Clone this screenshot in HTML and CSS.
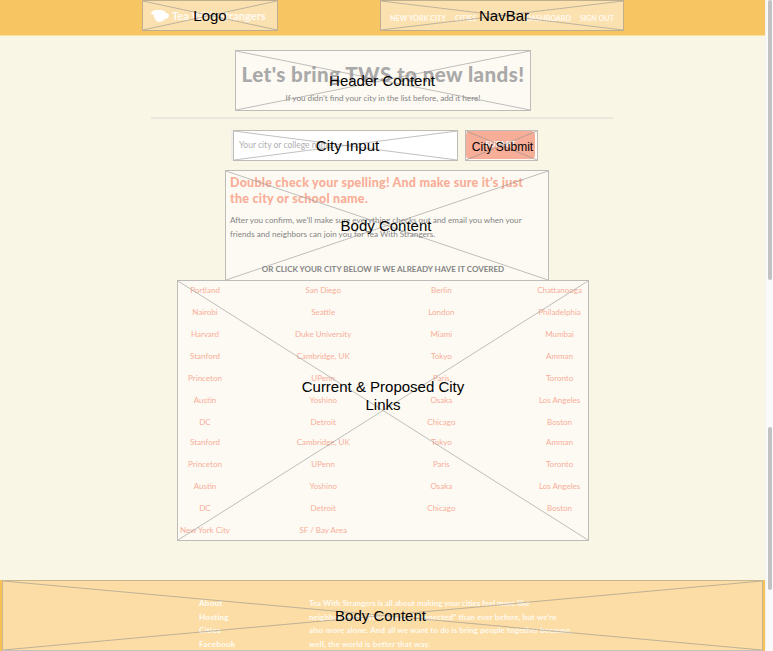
FILE: index.html
```html
<!DOCTYPE html>
<html lang="en">
<head>
<meta charset="utf-8">
<title>Suggest a city</title>
<link rel="stylesheet" href="styles.css">
</head>
<body>
<div class="page">
  <header class="topbar">
    <div class="wire logo">
      <svg class="teapot" viewBox="0 0 18 12"><path d="M2 1Q5-1 9 0Q14 0 15 3Q18 3 18 6Q17 9 14 9Q12 12 8 12Q4 11 4 8Q2 7 3 5L0 4Q0 2 2 1z"/></svg>
      <span class="brand">Tea With Strangers</span>
      <svg class="cross" viewBox="0 0 100 100" preserveAspectRatio="none"><path d="M0 0L100 100M0 100L100 0"/></svg>
      <b class="label">Logo</b>
    </div>
    <nav class="wire nav">
      <span class="n1">NEW YORK CITY</span><span class="n2">CITIES</span><span class="n3">DASHBOARD</span><span class="n4">SIGN OUT</span>
      <svg class="cross" viewBox="0 0 100 100" preserveAspectRatio="none"><path d="M0 0L100 100M0 100L100 0"/></svg>
      <b class="label">NavBar</b>
    </nav>
  </header>
  <main>
    <section class="wire intro">
      <h1>Let's bring TWS to new lands!</h1>
      <p>If you didn't find your city in the list before, add it here!</p>
      <svg class="cross" viewBox="0 0 100 100" preserveAspectRatio="none"><path d="M0 0L100 100M0 100L100 0"/></svg>
      <b class="label">Header Content</b>
    </section>
    <hr>
    <div class="form">
      <div class="wire input">
        <span>Your city or college name</span>
        <svg class="cross" viewBox="0 0 100 100" preserveAspectRatio="none"><path d="M0 0L100 100M0 100L100 0"/></svg>
        <b class="label">City Input</b>
      </div>
      <div class="wire submit">
        <span>SUBMIT</span>
        <svg class="cross" viewBox="0 0 100 100" preserveAspectRatio="none"><path d="M0 0L100 100M0 100L100 0"/></svg>
        <b class="label small">City Submit</b>
      </div>
    </div>
    <section class="wire copy">
      <h2>Double check your spelling! And make sure it’s just<br>the city or school name.</h2>
      <p>After you confirm, we’ll make sure everything checks out and email you when your<br>friends and neighbors can join you for Tea With Strangers.</p>
      <h3>OR CLICK YOUR CITY BELOW IF WE ALREADY HAVE IT COVERED</h3>
      <svg class="cross" viewBox="0 0 100 100" preserveAspectRatio="none"><path d="M0 0L100 100M0 100L100 0"/></svg>
      <b class="label">Body Content</b>
    </section>
    <section class="wire cities">
      <div class="grid">
        <a>Portland</a><a>San Diego</a><a>Berlin</a><a>Chattanooga</a>
        <a>Nairobi</a><a>Seattle</a><a>London</a><a>Philadelphia</a>
        <a>Harvard</a><a>Duke University</a><a>Miami</a><a>Mumbai</a>
        <a>Stanford</a><a>Cambridge, UK</a><a>Tokyo</a><a>Amman</a>
        <a>Princeton</a><a>UPenn</a><a>Paris</a><a>Toronto</a>
        <a>Austin</a><a>Yoshino</a><a>Osaka</a><a>Los Angeles</a>
        <a>DC</a><a>Detroit</a><a>Chicago</a><a>Boston</a>
      </div>
      <div class="grid more">
        <a>Stanford</a><a>Cambridge, UK</a><a>Tokyo</a><a>Amman</a>
        <a>Princeton</a><a>UPenn</a><a>Paris</a><a>Toronto</a>
        <a>Austin</a><a>Yoshino</a><a>Osaka</a><a>Los Angeles</a>
        <a>DC</a><a>Detroit</a><a>Chicago</a><a>Boston</a>
        <a>New York City</a><a>SF / Bay Area</a>
      </div>
      <svg class="cross" viewBox="0 0 100 100" preserveAspectRatio="none"><path d="M0 0L100 100M0 100L100 0"/></svg>
      <b class="label">Current &amp; Proposed City<br>Links</b>
    </section>
  </main>
  <footer>
    <div class="wire foot">
      <div class="links"><span>About</span><span>Hosting</span><span>Cities</span><span>Facebook</span></div>
      <div class="about">
        <span>Tea With Strangers is all about making your cities feel more like</span>
        <span>neighborhoods. We’re more “connected” than ever before, but we’re</span>
        <span>also more alone. And all we want to do is bring people together because,</span>
        <span>well, the world is better that way.</span>
      </div>
      <svg class="cross" viewBox="0 0 100 100" preserveAspectRatio="none"><path d="M0 0L100 100M0 100L100 0"/></svg>
      <b class="label">Body Content</b>
    </div>
  </footer>
</div>
<div class="scroll"><i class="thumb upper"></i><i class="thumb lower"></i></div>
</body>
</html>
```
FILE: styles.css
```css
* { box-sizing: border-box; }
body {
  margin: 0; width: 773px; height: 651px; overflow: hidden;
  display: flex; background: #fafafa;
  font-family: Lato, sans-serif;
}
.page { width: 765px; height: 651px; background: #faf6e6; display: flex; flex-direction: column; }
.wire { position: relative; border: 1px solid #bdbcb8; white-space: nowrap; background: #fdfaf3; }
.cross { position: absolute; left: 0; top: 0; width: 100%; height: 100%; }
.cross path { stroke: #8c8c8c; stroke-opacity: .55; fill: none; vector-effect: non-scaling-stroke; stroke-width: 1; }
.label {
  position: absolute; inset: 0; display: flex; align-items: center; justify-content: center;
  font: 15px/18px "Liberation Sans", sans-serif; color: #000; text-align: center;
}
.label.small { font-size: 12px; padding: 2px 0 0 2px; }
.nav .label, .input .label { padding-left: 4px; }
.intro .label, .copy .label { padding-right: 2px; }
.cities .label { padding-bottom: 30px; }
.foot .label { padding-right: 4px; }

.topbar { display: flex; height: 36px; background: #f7c562; border-bottom: 1px solid #fadf9f; padding-left: 142px; align-items: flex-start; }
.topbar .wire { height: 31px; background: #fce1b0; border-color: #c0ae8d; color: #fffaf0; }
.logo { width: 136px; display: flex; align-items: center; padding-left: 8px; }
.teapot { width: 18px; height: 12px; fill: #fff; margin-right: 3px; }
.brand { font: 700 11px/14px Lato, sans-serif; letter-spacing: .05px; }
.nav { width: 244px; margin-left: 102px; display: flex; align-items: center; padding: 5px 9px 0; font-size: 7.2px; font-weight: 700; }
.n2 { margin-left: 9px; }
.n3 { margin-left: auto; }
.n4 { margin-left: 9px; }

main { flex: none; height: 544px; }
.intro { width: 296px; height: 61px; margin: 14px 0 0 235px; text-align: center; }
h1 { margin: 10px 0 0; font: 900 20.5px/26px Lato, sans-serif; letter-spacing: .44px; color: #a9a9a9; }
.intro p { margin: 5px 0 0; font-size: 8.15px; line-height: 12px; color: #858585; }
hr { width: 462px; height: 2px; margin: 6px 0 0 151px; border: 0; background: #e9e8dc; }
.form { display: flex; margin: 11px 0 0 233px; }
.input { width: 225px; height: 31px; background: #fff; padding-left: 5px; font-size: 8.5px; line-height: 29px; color: #b0b0b0; box-shadow: -2px 0 0 #f0efe9; }
.submit { width: 73px; height: 31px; margin-left: 7px; background: #fdfaf3; }
.submit span { display: block; width: 69px; height: 28px; border-radius: 4px; background: #f7ae98; color: #fff; font: 700 8px/26px Lato, sans-serif; text-align: center; }
.copy { width: 324px; height: 111px; margin: 9px 0 0 225px; padding: 4px 0 0 4px; }
h2 { margin: 0; font: 900 12.5px/15.5px Lato, sans-serif; letter-spacing: .23px; color: #f9ae98; }
.copy p { margin: 8px 0 0; font-size: 8.13px; line-height: 13.5px; color: #858585; }
h3 { margin: 22px 0 0 -12px; font: 700 8px/12px Lato, sans-serif; color: #858585; text-align: center; }
.cities { width: 412px; height: 261px; margin: -1px 0 0 177px; }
.grid { display: grid; grid-template-columns: repeat(4, 54px); column-gap: 64.2px; grid-auto-rows: 22px; margin: -2px 0 0; }
.grid a { display: flex; align-items: center; justify-content: center; font-size: 8px; color: #f8ae9a; }

footer { height: 71px; background: #f7c155; padding: 0 2px; }
.foot { height: 71px; background: #fcdda5; border-color: #c9b58e; border-bottom-color: #c5c1bd; display: flex; padding: 16px 0 0 196px; color: #fffaf0; }
.foot .links { width: 110px; font-weight: 900; letter-spacing: .25px; }
.foot .links, .about { display: flex; flex-direction: column; font-size: 8px; line-height: 13.6px; }
.about { align-items: flex-start; font-weight: 700; letter-spacing: .1px; }
.about span:nth-child(1) { letter-spacing: -.05px; }

.scroll { width: 8px; padding-left: 2px; border-left: 1px solid #f0f0ee; }
.thumb { display: block; width: 4px; background: #c2c2c2; border-radius: 2px; }
.upper { height: 280px; }
.lower { height: 163px; margin-top: 147px; }
```
